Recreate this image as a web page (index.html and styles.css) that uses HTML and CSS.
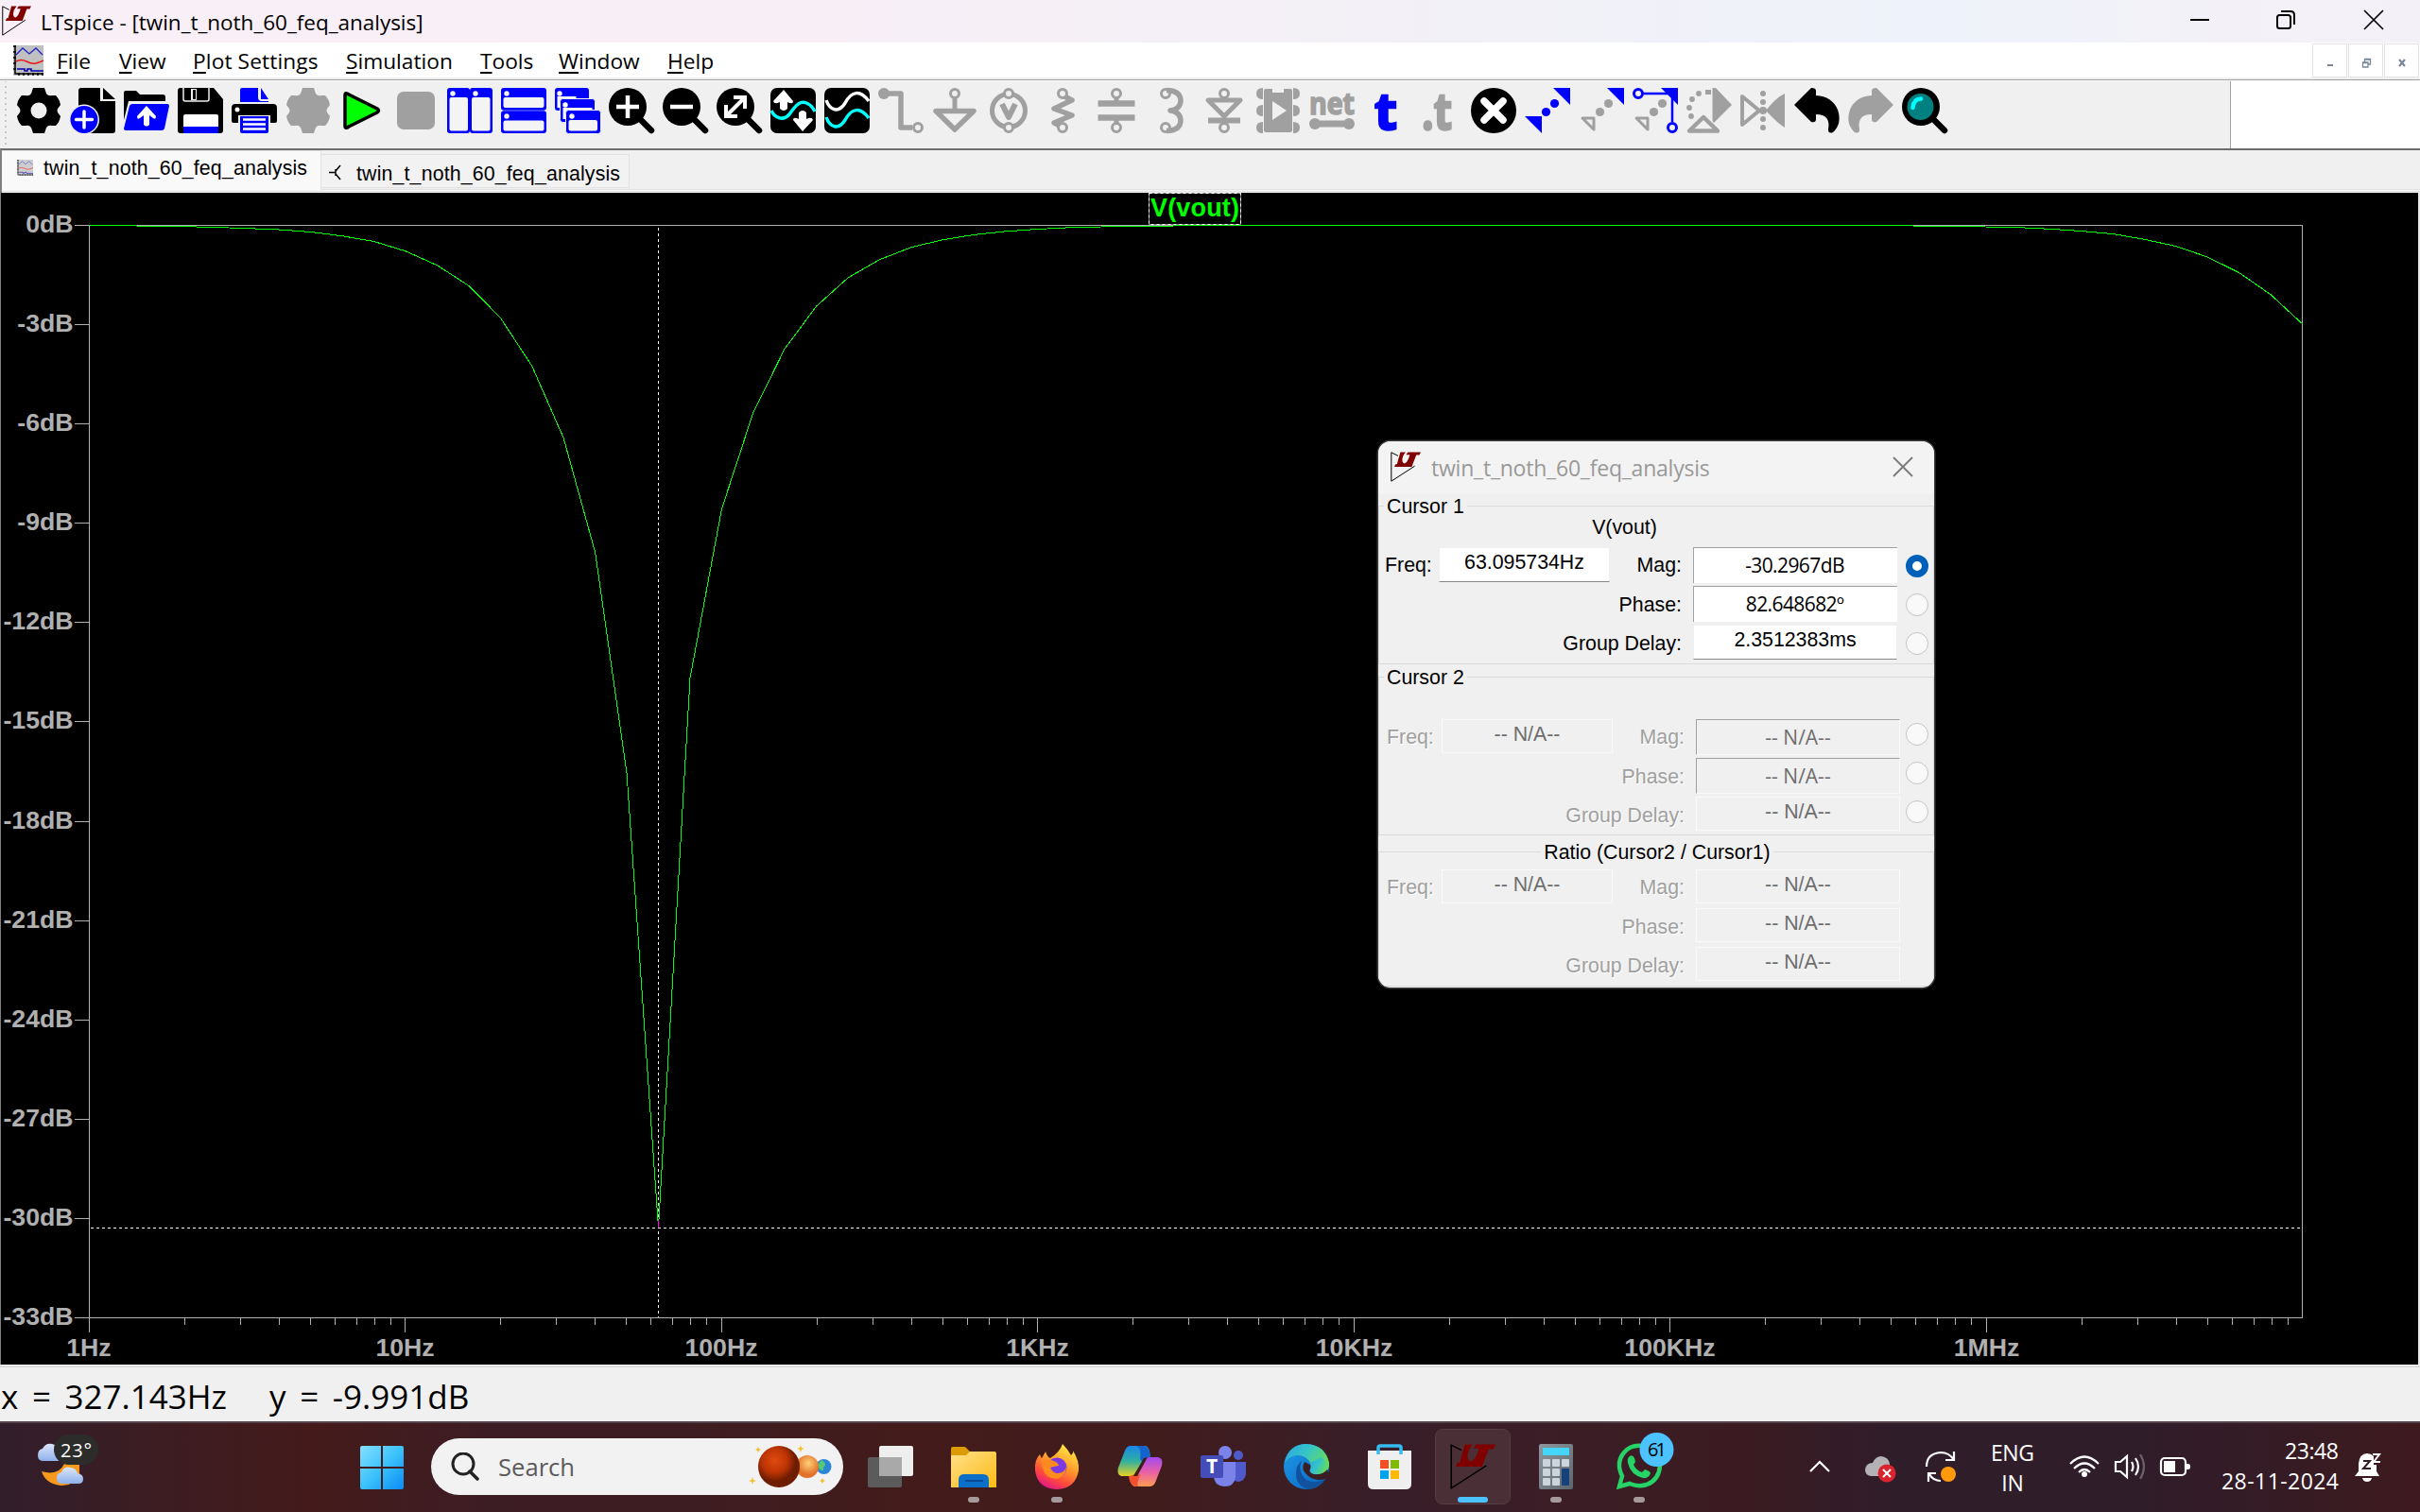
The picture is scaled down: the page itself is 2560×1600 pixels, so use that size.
FILE: index.html
```html
<!DOCTYPE html>
<html lang="en">
<head>
<meta charset="utf-8">
<title>LTspice - [twin_t_noth_60_feq_analysis]</title>
<link rel="stylesheet" href="styles.css">
</head>
<body>
<svg class="defs" width="0" height="0" aria-hidden="true">
  <defs>
    <symbol id="logo" viewBox="0 0 80 80">
      <path d="M20 11L2 2V78L64 38" fill="none" stroke="#000" stroke-width="2.500"/>
      <path d="M26 1H40Q31 11 31 22Q31 30 37 31Q45 29 51 8H41L46 1H80L76 9H68L56 40H10L13 33H17Z" fill="#800000"/>
    </symbol>
    <symbol id="plot" viewBox="0 0 32 32" preserveAspectRatio="none">
      <path d="M0 0H32V32H0Z" fill="#c0c0c0"/>
      <path d="M3 10L10 3L17 9L24 3L31 10" fill="none" stroke="#22c" stroke-width="1.3"/>
      <path d="M3 17Q8 14 14 17T24 19T32 16" fill="none" stroke="#e11" stroke-width="1.5"/>
      <path d="M4 25H12V27H15V25H19V27H32" fill="none" stroke="#00a" stroke-width="1.5"/>
      <path d="M2 0V30H32M0 1H3M0 7H3M0 13H3M0 19H3M0 25H3M6 29V32M11 29V32M16 29V32M21 29V32M26 29V32M31 29V32" fill="none" stroke="#000" stroke-width="1.5"/>
    </symbol>
    <linearGradient id="win" x2="1" y2="1"><stop stop-color="#86e0ff"/><stop offset=".5" stop-color="#3cc2fb"/><stop offset="1" stop-color="#0a8cf5"/></linearGradient>
    <linearGradient id="cloud" x2="0" y2="1"><stop stop-color="#dbe6fb"/><stop offset="1" stop-color="#8fb0ea"/></linearGradient>
    <linearGradient id="folder" x2="1" y2="1"><stop stop-color="#ffe08a"/><stop offset="1" stop-color="#fdbb14"/></linearGradient>
    <linearGradient id="fox" x1=".8" x2=".3" y2="1"><stop stop-color="#fff04a"/><stop offset=".45" stop-color="#ff9a2a"/><stop offset=".75" stop-color="#ff4a3c"/><stop offset="1" stop-color="#e0158a"/></linearGradient>
    <linearGradient id="copA" x2="0" y2="1"><stop stop-color="#1a86e8"/><stop offset=".5" stop-color="#30b0a0"/><stop offset="1" stop-color="#e8d020"/></linearGradient>
    <linearGradient id="copB" x2="0" y2="1"><stop stop-color="#a04af0"/><stop offset=".5" stop-color="#e860a8"/><stop offset="1" stop-color="#ff9a50"/></linearGradient>
    <linearGradient id="edgeA" x2="1" y2=".5"><stop stop-color="#2aa5e0"/><stop offset=".5" stop-color="#35c4c8"/><stop offset="1" stop-color="#67dc56"/></linearGradient>
    <linearGradient id="edgeB" x2="1" y2="1"><stop stop-color="#1d9be8"/><stop offset="1" stop-color="#0a62bd"/></linearGradient>
    <linearGradient id="calc" x2="1" y2="1"><stop stop-color="#8f979e"/><stop offset="1" stop-color="#5d666e"/></linearGradient>
    <radialGradient id="mars" cx=".4" cy=".35"><stop stop-color="#e04a10"/><stop offset=".6" stop-color="#bd3404"/><stop offset="1" stop-color="#6e1c02"/></radialGradient>
    <radialGradient id="venus" cx=".55" cy=".35"><stop stop-color="#ffd07a"/><stop offset="1" stop-color="#e2722a"/></radialGradient>
  </defs>
</svg>

<header class="titlebar">
  <svg class="app-logo" viewBox="0 0 80 80" preserveAspectRatio="none"><use href="#logo"/></svg>
  <span class="title">LTspice - [twin_t_noth_60_feq_analysis]</span>
  <div class="caption">
    <svg viewBox="0 0 20 20"><path d="M0 10H20"/></svg>
    <svg viewBox="0 0 20 20"><rect x="1" y="5" width="14" height="14" rx="2.5"/><path d="M5 1H15Q19 1 19 5V15"/></svg>
    <svg viewBox="0 0 20 20"><path d="M0 0L20 20M20 0L0 20"/></svg>
  </div>
</header>

<nav class="menubar">
  <svg class="doc-icon"><use href="#plot"/></svg>
  <div class="menus">
    <span class="m-file"><u>F</u>ile</span>
    <span class="m-view"><u>V</u>iew</span>
    <span class="m-plot"><u>P</u>lot Settings</span>
    <span class="m-sim"><u>S</u>imulation</span>
    <span class="m-tools"><u>T</u>ools</span>
    <span class="m-win"><u>W</u>indow</span>
    <span class="m-help"><u>H</u>elp</span>
  </div>
  <div class="mdi">
    <span><svg viewBox="0 0 12 12"><path d="M3 9H9" stroke-width="2"/></svg></span>
    <span><svg viewBox="0 0 12 12"><path d="M2.500 6H8V11H2.500ZM4.500 6V2.500H10.500V8H8M4 3H11M2 6.500H8" stroke-width="1.300"/></svg></span>
    <span><svg viewBox="0 0 12 12"><path d="M3 3L9 10M9 3L3 10" stroke-width="2.200"/></svg></span>
  </div>
</nav>

<div class="toolrow">
<div class="toolbar">
  <svg viewBox="0 0 48 48"><path fill-rule="evenodd" d="M18 0H30L32 6Q34 9 38 8L42 8Q46 12 47 18L44 22Q43 24 44 26L47 30Q46 36 42 40L38 40Q34 39 32 42L30 48H18L16 42Q14 39 10 40L6 40Q2 36 1 30L4 26Q5 24 4 22L1 18Q2 12 6 8L10 8Q14 9 16 6ZM24 15.500A8.500 8.500 0 1 0 24 32.500A8.500 8.500 0 1 0 24 15.500Z"/></svg>
  <svg viewBox="0 0 48 48"><path d="M12 0H32V14H48V45Q48 48 45 48H12Q9 48 9 45V3Q9 0 12 0Z"/><path d="M35 0L48 12H35Z"/><circle cx="15" cy="33.500" r="16" fill="#f0f0f0"/><circle cx="15" cy="33.500" r="14.500" fill="#00f"/><path d="M15 25V42M6.500 33.500H23.500" stroke="#fff" stroke-width="3.500" stroke-linecap="round"/></svg>
  <svg viewBox="0 0 48 48"><path d="M0 5Q0 3 2 3H13L17 7H41Q44 7 44 10V14H5L0 34Z"/><path d="M9 17H46Q48 17 48 19L43 43Q42 45 40 45H2Q0 45 0 43L6 19Q7 17 9 17Z" fill="#00f"/><path d="M24 19L34 30Q34 34 31 32L27 29V39Q24 42 21 39V29L17 32Q14 34 14 30Z" fill="#fff"/></svg>
  <svg viewBox="0 0 48 48"><path d="M3 0H38L48 12V45Q48 48 45 48H3Q0 48 0 45V3Q0 0 3 0Z"/><path d="M6 0V12Q6 14 8 14H31Q33 14 33 12V0" fill="none" stroke="#f0f0f0" stroke-width="1.500"/><path d="M14 1H20V13H14Z" fill="#f0f0f0"/><path d="M16 2H19V12H16Z"/><path d="M6 30Q6 28 8 28H41Q43 28 43 30V41H6Z" fill="#fff"/><path d="M6 41H43V48H6Z" fill="#00f"/></svg>
  <svg viewBox="0 0 48 48"><path d="M11 0H28V10Q28 14 32 14H39V15H9V2Q9 0 11 0ZM31 0L39 12H31Z" fill="#00f"/><path d="M4 17H44Q48 17 48 21V35Q48 37 46 37H41V29H7V37H2Q0 37 0 35V21Q0 17 4 17Z"/><circle cx="6" cy="23" r="2.500" fill="#fff"/><path d="M9 30H39V46Q39 48 37 48H11Q9 48 9 46Z" fill="#00f"/><path d="M12 33.500H36M12 38.500H36M12 43.500H36" stroke="#fff" stroke-width="2.500"/></svg>
  <svg class="dim" viewBox="0 0 48 48"><path d="M18 0H30L32 6Q34 9 38 8L42 8Q46 12 47 18L44 22Q43 24 44 26L47 30Q46 36 42 40L38 40Q34 39 32 42L30 48H18L16 42Q14 39 10 40L6 40Q2 36 1 30L4 26Q5 24 4 22L1 18Q2 12 6 8L10 8Q14 9 16 6Z"/></svg>
  <svg viewBox="0 0 48 48"><path d="M6 8Q6 4 10 7L40 22Q43 24 40 26L10 41Q6 44 6 40Z" fill="#0f0" stroke="#000" stroke-width="3.500"/></svg>
  <svg class="dim" viewBox="0 0 48 48"><rect x="4" y="4" width="40" height="40" rx="7"/></svg>
  <svg viewBox="0 0 48 48"><g fill="#00f"><rect width="24" height="48" rx="3"/><rect x="24" width="24" height="48" rx="3"/></g><g fill="#f4f4f4"><rect x="2.500" y="10" width="19.500" height="35.500" rx="2"/><rect x="26" y="10" width="19.500" height="35.500" rx="2"/><circle cx="6" cy="6" r="2.700"/><circle cx="30" cy="6" r="2.700"/></g></svg>
  <svg viewBox="0 0 48 48"><g fill="#00f"><rect width="48" height="23.700" rx="3"/><rect y="24.300" width="48" height="23.700" rx="3"/></g><g fill="#f4f4f4"><rect x="2.500" y="10" width="43" height="11" rx="2"/><rect x="2.500" y="34.500" width="43" height="11" rx="2"/><circle cx="6" cy="6" r="2.700"/><circle cx="6" cy="30" r="2.700"/></g></svg>
  <svg viewBox="0 0 48 48"><g fill="#00f" stroke="#f0f0f0" stroke-width="0"><rect width="36" height="24" rx="3"/><rect x="2.500" y="9" width="20" height="12" fill="#f4f4f4"/><rect x="5.500" y="11.500" width="37" height="25" rx="3" stroke-width="1"/><rect x="8.500" y="21" width="31" height="12" fill="#f4f4f4"/><rect x="11.500" y="23.500" width="37" height="25" rx="3" stroke-width="1"/><rect x="14.500" y="34" width="30.500" height="11.500" rx="2" fill="#f4f4f4"/></g><g fill="#fff"><circle cx="5" cy="6" r="2.700"/><circle cx="11" cy="18" r="2.700"/><circle cx="18" cy="30" r="2.700"/></g></svg>
  <svg viewBox="0 0 48 48"><circle cx="20" cy="20" r="20"/><path d="M34 34L45 45" stroke="#000" stroke-width="6.500" stroke-linecap="round"/><path d="M20 8V32M8 20H32" stroke="#fff" stroke-width="4.500"/></svg>
  <svg viewBox="0 0 48 48"><circle cx="20" cy="20" r="20"/><path d="M34 34L45 45" stroke="#000" stroke-width="6.500" stroke-linecap="round"/><path d="M8 20H32" stroke="#fff" stroke-width="4.500"/></svg>
  <svg viewBox="0 0 48 48"><circle cx="20" cy="20" r="20"/><path d="M34 34L45 45" stroke="#000" stroke-width="6.500" stroke-linecap="round"/><path d="M11 29L29 11M18 10H30V22M10 18V30H22" fill="none" stroke="#fff" stroke-width="4"/></svg>
  <svg viewBox="0 0 48 48"><rect width="48" height="48" rx="7"/><path d="M1 24C4 31 13 36 20 28C27 18 32 12 40 17Q44 19 47 25" fill="none" stroke="#0ff" stroke-width="3.500"/><path d="M14 2L24 14Q24 18 18 15V22Q14 26 10 22V15Q4 18 3 14ZM34 46L24 34Q24 30 30 33V26Q34 22 38 26V33Q44 30 45 34Z" fill="#fff"/></svg>
  <svg viewBox="0 0 48 48"><rect width="48" height="48" rx="7"/><path d="M2 13C6 24 15 27 22 16C29 3 38 2 47 14" fill="none" stroke="#fff" stroke-width="3.500"/><path d="M2 31C6 42 15 45 22 34C29 21 38 20 47 32" fill="none" stroke="#0ff" stroke-width="3.500"/></svg>
  <svg class="dim" viewBox="0 0 48 48"><circle cx="6" cy="6" r="6"/><g class="ln"><path d="M6 6H24V42H36" stroke-width="5.500"/><circle cx="42" cy="42" r="4.500" stroke-width="3"/></g></svg>
  <svg class="dim" viewBox="0 0 48 48"><g class="ln"><circle cx="24" cy="6" r="4.500" stroke-width="3"/><path d="M24 11V22" stroke-width="5"/><path d="M4 24.500H44L24 44Z" stroke-width="5.500"/></g></svg>
  <svg class="dim" viewBox="0 0 48 48"><g class="ln"><circle cx="24" cy="24" r="17.500" stroke-width="5"/><path d="M17 17L24 31L31 17" stroke-width="6"/><circle cx="24" cy="6" r="4.500" stroke-width="3" fill="#f0f0f0"/><circle cx="24" cy="42" r="4.500" stroke-width="3" fill="#f0f0f0"/></g></svg>
  <svg class="dim" viewBox="0 0 48 48"><g class="ln"><path d="M26 9L34 13L15 22L34 29L15 37L21 40" stroke-width="5.500"/><circle cx="24" cy="6" r="4.500" stroke-width="3" fill="#f0f0f0"/><circle cx="24" cy="42" r="4.500" stroke-width="3" fill="#f0f0f0"/></g></svg>
  <svg class="dim" viewBox="0 0 48 48"><g class="ln"><path d="M4.500 16.500H43.500M4.500 31.500H43.500" stroke-width="6.500"/><path d="M24 10V16M24 32V38" stroke-width="5"/><circle cx="24" cy="6" r="4.500" stroke-width="3"/><circle cx="24" cy="42" r="4.500" stroke-width="3"/></g></svg>
  <svg class="dim" viewBox="0 0 48 48"><g class="ln"><path d="M20 2.500Q35 3 35 14Q34 23 24 24Q34 25 35 34Q35 45 20 45.500" stroke-width="5.500"/><circle cx="19" cy="6" r="4.500" stroke-width="3"/><circle cx="19" cy="42" r="4.500" stroke-width="3"/></g></svg>
  <svg class="dim" viewBox="0 0 48 48"><g class="ln"><path d="M7 13H41L24 30Z" stroke-width="5"/><path d="M7 34.500H41" stroke-width="6"/><circle cx="24" cy="6" r="4.500" stroke-width="3" fill="#f0f0f0"/><circle cx="24" cy="42" r="4.500" stroke-width="3"/></g></svg>
  <svg class="dim" viewBox="0 0 48 48"><path d="M11 1H18V5H30V1H37Q39 1 39 3V45Q39 47 37 47H11Q9 47 9 45V3Q9 1 11 1Z"/><path d="M18 14L33 24L18 34Z" fill="#f0f0f0"/><path d="M8 0V12Q1 12 1 6Q1 0 8 0ZM8 18V30Q1 30 1 24Q1 18 8 18ZM8 36V48Q1 48 1 42Q1 36 8 36ZM40 0V12Q47 12 47 6Q47 0 40 0ZM40 18V30Q47 30 47 24Q47 18 40 18ZM40 36V48Q47 48 47 42Q47 36 40 36Z"/></svg>
  <svg class="dim" viewBox="0 0 48 48"><text class="glyph" x="0" y="28" font-size="32" textLength="48" lengthAdjust="spacingAndGlyphs">net</text><path d="M6 38H42" class="ln" stroke-width="7"/><circle cx="6" cy="38" r="6"/><circle cx="42" cy="38" r="6"/></svg>
  <svg viewBox="0 0 48 48"><text class="glyph big" x="12" y="43.500" font-size="54" textLength="24" lengthAdjust="spacingAndGlyphs" fill="#00f" stroke="#00f">t</text></svg>
  <svg class="dim" viewBox="0 0 48 48"><text class="glyph big grey" x="5" y="43.500" font-size="54" textLength="32" lengthAdjust="spacingAndGlyphs">.t</text></svg>
  <svg viewBox="0 0 48 48"><circle cx="24" cy="24" r="24"/><path d="M14 14L34 34M34 14L14 34" stroke="#fff" stroke-width="7.500" stroke-linecap="round"/></svg>
  <svg viewBox="0 0 48 48"><path d="M30 0H48V18ZM0 30H18V48Z" fill="#00f"/><circle cx="31.500" cy="16.500" r="4.600" fill="#00f"/><circle cx="22.500" cy="25.500" r="4.600" fill="#00f"/></svg>
  <svg class="dim" viewBox="0 0 48 48"><path d="M30 0H48V18Z" fill="#00f"/><path d="M4 32H16V44Z" class="ln" stroke-width="3"/><circle cx="31.500" cy="16.500" r="4.600"/><circle cx="22.500" cy="25.500" r="4.600"/></svg>
  <svg class="dim" viewBox="0 0 48 48"><path d="M30 0H48V18Z" fill="#00f"/><path d="M4 32H16V44Z" class="ln" stroke-width="3"/><circle cx="31.500" cy="16.500" r="4.600"/><circle cx="22.500" cy="25.500" r="4.600"/><g fill="none" stroke="#00f" stroke-width="3"><circle cx="6" cy="6" r="4.500"/><path d="M11 6H42V36" stroke-width="2.500"/><circle cx="42" cy="42" r="4.500"/></g></svg>
  <svg class="dim" viewBox="0 0 48 48"><path d="M27.500 0H31L48 18L29 37L27.500 35Z"/><path d="M3 45.500H33L18 31Z" class="ln" stroke-width="4.500"/><circle cx="5" cy="30" r="2.900"/><circle cx="3" cy="21" r="2.900"/><circle cx="6" cy="12" r="2.900"/><circle cx="13" cy="6" r="2.900"/><path d="M20 2H26V7H20Z"/></svg>
  <svg class="dim" viewBox="0 0 48 48"><path d="M2 9V39L20 24Z" class="ln" stroke-width="4"/><path d="M47 6V42Q40 38 27 24Q38 10 47 6Z"/><circle cx="24" cy="6" r="3"/><circle cx="24" cy="15" r="3"/><circle cx="24" cy="24" r="4"/><circle cx="24" cy="33" r="3"/><circle cx="24" cy="42" r="3"/></svg>
  <svg viewBox="0 0 48 48"><path id="undo" d="M0 18L18 0Q23 0 23 3V8Q40 9 46 23Q51 38 41 47Q36 49 36 44Q39 28 23 28V33Q23 37 18 36Z"/></svg>
  <svg class="dim" viewBox="0 0 48 48"><use href="#undo" transform="matrix(-1 0 0 1 48 0)"/></svg>
  <svg viewBox="0 0 48 48"><circle cx="20" cy="20" r="20"/><path d="M34 34L45 45" stroke="#000" stroke-width="6.500" stroke-linecap="round"/><circle cx="19.500" cy="20" r="14" fill="#008080"/><path d="M11.500 21Q12 12 20 11.500" fill="none" stroke="#0ff" stroke-width="4.500" stroke-linecap="round"/></svg>
</div>
</div>

<div class="tabs">
  <div class="tab active"><svg class="tab-plot"><use href="#plot"/></svg><span>twin_t_noth_60_feq_analysis</span></div>
  <div class="tab"><svg class="tab-sch" viewBox="0 0 13 17"><path d="M0 8.500H7M7 5V12M7 7L12 1M7 10L12 16" fill="none" stroke="#000" stroke-width="1.500"/></svg><span>twin_t_noth_60_feq_analysis</span></div>
</div>

<main class="plot-area">
<svg class="graph" viewBox="0 204 2560 1240">
  <defs>
    <path id="decade" d="M.5 1395V1410M101.200 1395V1402M160.100 1395V1402M201.800 1395V1402M234.300 1395V1402M260.700 1395V1402M283.100 1395V1402M302.500 1395V1402M319.600 1395V1402"/>
  </defs>
  <g class="axis">
    <path d="M79 238.500H2435.500V1394.500M94.500 238.500V1394.500M79 1394.500H2435.500M79 343.500H94M79 448.500H94M79 553.500H94M79 658.500H94M79 763.500H94M79 869.500H94M79 974.500H94M79 1079.500H94M79 1184.500H94M79 1289.500H94"/>
    <use href="#decade" x="94"/><use href="#decade" x="428"/><use href="#decade" x="763"/><use href="#decade" x="1097"/><use href="#decade" x="1432"/><use href="#decade" x="1766"/><use href="#decade" x="2101"/>
  </g>
  <g class="ylab">
    <text x="77.500" y="246">0dB</text><text x="77.500" y="351">-3dB</text><text x="77.500" y="456">-6dB</text><text x="77.500" y="561">-9dB</text><text x="77.500" y="666">-12dB</text><text x="77.500" y="771">-15dB</text><text x="77.500" y="877">-18dB</text><text x="77.500" y="982">-21dB</text><text x="77.500" y="1087">-24dB</text><text x="77.500" y="1192">-27dB</text><text x="77.500" y="1297">-30dB</text><text x="77.500" y="1402">-33dB</text>
  </g>
  <g class="xlab">
    <text x="94" y="1434.500">1Hz</text><text x="428.500" y="1434.500">10Hz</text><text x="763" y="1434.500">100Hz</text><text x="1097.500" y="1434.500">1KHz</text><text x="1432.500" y="1434.500">10KHz</text><text x="1766.500" y="1434.500">100KHz</text><text x="2101.500" y="1434.500">1MHz</text>
  </g>
  <polyline class="trace" points="94.500,238.500 128,238.700 161.400,239.300 194.800,239.700 228.300,240.500 261.700,241.700 295.100,243 328.600,245.500 362,249.700 395.500,255.500 428.900,265.700 462.400,280.700 495.800,302.300 529.200,336 562.700,387.300 596.100,463.300 629.600,584.300 663,818 696.500,1299 730,717.500 763.400,538.800 796.800,436.600 830.200,368.900 863.700,324 897.100,293.900 930.600,274.700 964,261.700 997.500,253.700 1031,248.300 1064.400,244.800 1097.800,242.500 1131.200,240.800 1164.700,240 1198.100,239.500 1231.600,239.200 1265,238.500 1999,238.500 2032.700,239.200 2066.200,239.500 2100,240 2134,240.600 2168,242.300 2201,244.500 2235,247.500 2268.300,253.300 2301.700,260.500 2335.200,272 2368.600,288.500 2402,311.700 2435.500,342.700"/>
  <path class="cursor" d="M696.500 241V1394M96 1299.500H2435"/>
  <path d="M696.500 1291V1299" stroke="#f0f" stroke-width="1"/>
  <rect x="1215.500" y="204.500" width="97" height="33" fill="#000" stroke="#808080"/>
  <rect x="1215.500" y="204.500" width="97" height="33" fill="none" stroke="#fff" stroke-dasharray="3 3"/>
  <text class="trace-name" x="1217" y="228.500" textLength="94">V(vout)</text>
</svg>

<section class="dialog">
  <div class="dlg-title">
    <svg class="dlg-logo"><use href="#logo"/></svg>
    <span>twin_t_noth_60_feq_analysis</span>
    <svg class="dlg-close" viewBox="0 0 20 20"><path d="M0 0L20 20M20 0L0 20"/></svg>
  </div>
  <div class="group g1">
    <h3>Cursor 1</h3>
    <div class="sub">V(vout)</div>
    <div class="row"><label>Freq:</label><b class="field">63.095734Hz</b><label class="r">Mag:</label><b class="field sunk">-30.2967dB</b><i class="radio on"></i></div>
    <div class="row"><label class="r wide">Phase:</label><b class="field sunk">82.648682º</b><i class="radio"></i></div>
    <div class="row"><label class="r wide">Group Delay:</label><b class="field">2.3512383ms</b><i class="radio"></i></div>
  </div>
  <div class="group off g2">
    <h3>Cursor 2</h3>
    <div class="sub"></div>
    <div class="row"><label>Freq:</label><b class="field">-- N/A--</b><label class="r">Mag:</label><b class="field sunk">-- N/A--</b><i class="radio"></i></div>
    <div class="row"><label class="r wide">Phase:</label><b class="field sunk">-- N/A--</b><i class="radio"></i></div>
    <div class="row"><label class="r wide">Group Delay:</label><b class="field">-- N/A--</b><i class="radio"></i></div>
  </div>
  <div class="group off g3">
    <h3>Ratio (Cursor2 / Cursor1)</h3>
    <div class="row"><label>Freq:</label><b class="field">-- N/A--</b><label class="r">Mag:</label><b class="field">-- N/A--</b></div>
    <div class="row"><label class="r wide">Phase:</label><b class="field">-- N/A--</b></div>
    <div class="row"><label class="r wide">Group Delay:</label><b class="field">-- N/A--</b></div>
  </div>
</section>
</main>

<div class="status"><span class="sx">x = 327.143Hz</span><span class="sy">y = -9.991dB</span></div>

<footer class="taskbar">
  <svg class="weather" viewBox="40 1514 68 62" width="68" height="62">
    <path d="M46 1546Q40 1546 40 1540Q40 1534 45 1533Q48 1527 55 1528Q62 1529 64 1536V1546Z" fill="url(#cloud)"/>
    <path d="M44 1557Q62 1562 68 1549H84V1560Q78 1573 64 1572Q48 1570 44 1557Z" fill="#f59a1c"/>
    <path d="M66 1570Q60 1570 60 1564Q60 1559 65 1558Q68 1551 75 1553Q81 1554 82 1559Q88 1560 88 1565Q88 1570 83 1570Z" fill="url(#cloud)"/>
    <rect x="57" y="1518" width="47" height="32" rx="16" fill="#2c2c2b"/>
    <text class="badge-text" x="64" y="1542" fill="#fff" textLength="33">23°</text>
  </svg>
  <svg class="start" viewBox="0 0 46 46"><path d="M2 0H22V22H0V2Q0 0 2 0ZM24 0H44Q46 0 46 2V22H24ZM0 24H22V46H2Q0 46 0 44ZM24 24H46V44Q46 46 44 46H24Z" fill="url(#win)"/></svg>
  <div class="search">
    <svg class="lens" viewBox="0 0 30 30"><circle cx="13" cy="12" r="11" fill="none" stroke="#222" stroke-width="3"/><path d="M20 20L28 28" stroke="#222" stroke-width="3.500" stroke-linecap="round"/></svg>
    <span>Search</span>
    <svg class="planets" viewBox="790 1526 92 52">
      <circle cx="871.500" cy="1552" r="8" fill="#2c86d8"/><path d="M869 1545Q876 1549 871 1553Q872 1558 867 1555Q864 1549 869 1545Z" fill="#55c873"/>
      <circle cx="854" cy="1552" r="12" fill="url(#venus)"/><circle cx="824" cy="1552" r="22" fill="url(#mars)"/>
      <path d="M847 1529L848 1532L851 1533L848 1534L847 1537L846 1534L843 1533L846 1532ZM802 1531L803 1533L805 1534L803 1535L802 1537L801 1535L799 1534L801 1533ZM796 1563L797 1566L800 1567L797 1568L796 1571L795 1568L792 1567L795 1566ZM870 1564L871 1566L873 1567L871 1568L870 1570L869 1568L867 1567L869 1566Z" fill="#f2c02e"/>
    </svg>
  </div>
  <div class="apps">
    <div class="app"><svg viewBox="0 0 48 48"><rect x="12" y="2" width="36" height="32" rx="2" fill="#eee"/><rect x="0" y="14" width="36" height="32" rx="2" fill="#5b5b5b"/><rect x="12" y="14" width="24" height="20" fill="#a9a9a9"/></svg></div>
    <div class="app run"><svg viewBox="0 0 48 48"><path d="M0 5Q0 3 2 3H15L20 8V12H0Z" fill="#dc9a06"/><path d="M0 12H16L20 8H46Q48 8 48 10V46H0Z" fill="url(#folder)"/><path d="M8 46V38Q8 32 14 32H34Q40 32 40 38V46Z" fill="#0b6fc8"/><path d="M15 39H34" stroke="#084a94" stroke-width="2"/></svg></div>
    <div class="app run"><svg viewBox="0 0 48 48"><path d="M30 0Q36 6 39 12Q42 9 41 7Q48 18 47 28Q44 47 24 48Q3 47 1 28Q0 17 6 11Q7 14 8 15Q11 10 12 8Q14 14 17 15Q27 9 30 0Z" fill="url(#fox)"/><circle cx="24" cy="25" r="10.500" fill="#7a3ae0"/><path d="M8 18Q16 15 23 19Q26 21 26 23Q20 24 17 25Q20 31 25 31Q32 31 34 24Q34 34 24 37Q12 37 9 26Z" fill="#ff8a1e"/></svg></div>
    <div class="app"><svg viewBox="0 0 48 48"><path d="M14 2H30Q34 3 35 14Q29 14 27 20L20 29Q18 35 12 34H4Q-1 32 1 25L8 7Q10 2 14 2Z" fill="url(#copA)"/><path d="M28 2Q34 4 35 14Q29 14 27 20L24 16Q26 4 20 2Z" fill="#1662cc"/><path d="M34 14H43Q49 15 47 23L40 41Q38 45 34 45H18Q14 44 13 34Q19 34 21 29L27 18Q29 14 34 14Z" fill="url(#copB)"/><path d="M12 34H13Q19 33 21 29L24 33Q20 42 22 45Q13 46 12 34Z" fill="#f0502e"/><path d="M28 15L32 14L21 34L17 34Z" fill="#3f1c1e"/></svg></div>
    <div class="app"><svg viewBox="0 0 48 48"><circle cx="26" cy="9" r="7" fill="#7b83eb"/><circle cx="40" cy="12" r="5" fill="#5059c9"/><path d="M35 19H48V32Q47 39 40 40Q36 40 35 36Z" fill="#5059c9"/><path d="M14 19H37V35Q36 45 25 45Q14 44 14 34Z" fill="#7b83eb"/><rect y="12" width="24" height="24" rx="2" fill="#444db8"/><text class="tee" x="12" y="31" fill="#fff">T</text></svg></div>
    <div class="app"><svg viewBox="0 0 48 48"><circle cx="24" cy="24" r="24" fill="url(#edgeB)"/><path d="M1 20Q5 0 24 0Q44 1 48 20Q49 31 36 32Q27 32 28 27Q30 24 28 20Q24 12 14 12Q5 13 1 20Z" fill="url(#edgeA)"/><path d="M19 18Q14 29 24 38Q34 43 44 37Q38 47 26 48Q13 44 13 32Q13 22 19 18Z" fill="#10529e"/><path d="M28 22Q29 26 27 28Q28 33 37 32Q43 31 46 27L48 33L44 37Q34 40 26 34Q17 27 22 19Z" fill="#3b1d24"/><path d="M28 20Q30 24 28 27Q27 32 36 32Q45 31 48 22L40 14Z" fill="url(#edgeA)"/></svg></div>
    <div class="app"><svg viewBox="0 0 48 48"><path d="M1 7H47V42Q47 48 41 48H7Q1 48 1 42Z" fill="#efefef"/><path d="M12 11V4Q12 2 14 2H34Q36 2 36 4V11" fill="none" stroke="#35bdf3" stroke-width="3.500"/><path d="M14 17H23V26H14Z" fill="#f25022"/><path d="M25 17H34V26H25Z" fill="#7fba00"/><path d="M14 28H23V37H14Z" fill="#00a4ef"/><path d="M25 28H34V37H25Z" fill="#ffb900"/></svg></div>
    <div class="app current"><svg viewBox="0 0 80 80"><use href="#logo"/></svg></div>
    <div class="app run"><svg viewBox="0 0 48 48"><rect x="6" width="36" height="48" rx="2" fill="url(#calc)"/><rect x="10" y="4" width="28" height="8" rx="1" fill="#43d6fa"/><g fill="#ccd5dd"><rect x="10" y="16" width="8" height="8" rx="1"/><rect x="20" y="16" width="8" height="8" rx="1"/><rect x="30" y="16" width="8" height="8" rx="1"/><rect x="10" y="26" width="8" height="8" rx="1"/><rect x="20" y="26" width="8" height="8" rx="1"/><rect x="10" y="36" width="8" height="8" rx="1"/><rect x="20" y="36" width="8" height="8" rx="1"/></g><rect x="30" y="26" width="8" height="18" rx="1" fill="#16427c"/></svg></div>
    <div class="app run"><svg viewBox="0 0 48 48" class="wa"><path d="M3 45L6 34Q-1 20 8 9Q17-1 31 3Q45 8 46 23Q45 38 32 43Q23 46 14 42Z" fill="none" stroke="#25d366" stroke-width="4.500"/><path d="M14 13Q17 11 19 15L20 19L18 22Q21 28 27 30L30 27Q36 29 36 31Q34 37 28 36Q15 33 12 20Q11 15 14 13Z" fill="#25d366"/><circle cx="42.500" cy="6" r="18" fill="#4cc2ff"/><text class="badge-text" x="33" y="13" textLength="20">61</text></svg></div>
  </div>
  <svg class="tray" viewBox="1900 1506 660 94" width="660" height="94">
    <g fill="none" stroke="#fff" stroke-width="2.200">
      <path d="M1915 1557L1925 1547L1935 1557"/>
      <path d="M2038 1552Q2038 1538 2053 1537Q2062 1537 2067 1545M2067 1536V1545H2058M2040 1568V1559H2048M2041 1560Q2045 1567 2053 1567"/>
      <path d="M2190 1549Q2205 1534 2220 1549M2194 1554Q2205 1543 2216 1554M2199 1558Q2205 1552 2211 1558"/>
      <path d="M2238 1547H2243L2250 1541V1563L2243 1557H2238ZM2255 1547Q2258 1552 2255 1557M2259 1543Q2265 1552 2259 1561"/>
      <path d="M2264 1539Q2272 1552 2264 1565" stroke="#6d5d66"/>
      <rect x="2286" y="1543" width="26" height="18" rx="4"/>
    </g>
    <path d="M1979 1562Q1973 1561 1973 1555Q1974 1548 1981 1548Q1984 1541 1990 1541Q1998 1542 1999 1549V1562Z" fill="#b5b2b5"/>
    <circle cx="1996" cy="1559" r="9.500" fill="#d9232e"/><path d="M1992 1555L2000 1563M2000 1555L1992 1563" stroke="#fff" stroke-width="2"/>
    <circle cx="2061" cy="1560" r="8" fill="#ff9a0c"/>
    <circle cx="2205" cy="1560" r="3" fill="#fff"/>
    <path d="M2289 1546H2301V1558H2289ZM2313 1549H2315Q2317 1549 2317 1552Q2317 1555 2315 1555H2313Z" fill="#fff"/>
    <path d="M2491 1562L2495 1557V1549Q2496 1538 2504 1538Q2508 1538 2511 1541V1550H2514V1557L2517 1562ZM2499 1564H2509Q2508 1568 2504 1568Q2500 1568 2499 1564Z" fill="#fff"/>
    <path d="M2500 1546H2507L2500 1554H2508" fill="none" stroke="#331d28" stroke-width="2"/><path d="M2510 1539H2517L2511 1547H2518" fill="none" stroke="#fff" stroke-width="2"/>
    <g class="tray-text"><text x="2129" y="1545.500" text-anchor="middle" textLength="46">ENG</text><text x="2129" y="1577.500" text-anchor="middle">IN</text><text x="2474" y="1544" text-anchor="end" textLength="57">23:48</text><text x="2474" y="1575.500" text-anchor="end" textLength="124">28-11-2024</text></g>
  </svg>
</footer>
</body>
</html>
```
FILE: styles.css
```css
* { box-sizing: border-box; }
body {
  margin: 0;
  width: 2560px;
  height: 1600px;
  overflow: hidden;
  display: flex;
  flex-direction: column;
  background: #f0f0f0;
  font-family: "Open Sans", "Noto Sans", sans-serif;
  color: #000;
}
svg { display: block; flex: none; }
.defs { position: absolute; }

.titlebar {
  height: 45px;
  flex: none;
  display: flex;
  background: linear-gradient(90deg, #f9eff7 0, #f8eef6 30%, #f3f0f6 55%, #eef2fa 80%, #f3f1f7 92%, #f4f0f7 100%);
}
.app-logo { width: 31px; height: 32px; margin: 6px 0 0 2px; }
.title { margin-left: 10px; line-height: 47px; font-size: 22.5px; letter-spacing: -.02px; white-space: nowrap; }
.caption { margin-left: auto; display: flex; padding: 11px 39px 0 0; }
.caption svg { width: 20px; height: 20px; margin-left: 71px; overflow: visible; fill: none; stroke: #000; stroke-width: 2; }
.caption svg:nth-child(3) { stroke-width: 1.7; margin-left: 73px; }

.menubar { height: 37px; flex: none; display: flex; background: #fff; }
.doc-icon { width: 32px; height: 32px; margin: 3px 0 0 14px; }
.menus { display: flex; margin-left: 14px; font-size: 22.7px; line-height: 40px; white-space: nowrap; }
.menus u { text-decoration-thickness: 1.5px; text-underline-offset: 3px; }
.m-file { width: 66px; }
.m-view { width: 78px; }
.m-plot { width: 162px; letter-spacing: .12px; }
.m-sim { width: 142px; }
.m-tools { width: 83px; }
.m-win { width: 115px; }
.mdi { margin-left: auto; display: flex; gap: 1px; padding: 1px 1px 0 0; }
.mdi span { width: 37px; height: 36px; border: 1px solid #e4e4e4; padding: 13px 0 0 12px; }
.mdi svg { width: 12px; height: 12px; fill: none; stroke: #778797; }

.toolrow {
  height: 75px;
  flex: none;
  display: flex;
  border-top: 1px solid #f0f0f0;
  background: linear-gradient(#f0f0f0 1px, #a0a0a0 1px, #a0a0a0 2px, #fff 2px);
  padding-top: 3px;
}
.toolbar {
  width: 2360px;
  background: radial-gradient(circle, #c8c8c8 1px, transparent 1.5px) 3px 3px / 6px 6px repeat-y, #f0f0f0;
  border-right: 1px solid #a0a0a0;
  display: flex;
  gap: 9px;
  padding: 7px 0 0 17px;
}
.toolbar svg { width: 48px; height: 48px; overflow: visible; }
.dim { fill: #a0a0a0; }
.ln { fill: none; stroke: #a0a0a0; stroke-linejoin: round; }
.glyph { font-family: "Open Sans", sans-serif; font-weight: 700; stroke: #a0a0a0; stroke-width: 1.6; }
.glyph.big { stroke: #00f; stroke-width: 2.5; }
.glyph.grey { stroke: #a0a0a0; }

.tabs {
  height: 47px;
  flex: none;
  display: flex;
  align-items: flex-start;
  border-top: 2px solid #6d6d6d;
  border-left: 2px solid #808080;
  background: linear-gradient(#f0f0f0 41px, #e2e2e2 41px, #e2e2e2 42px, #f7f7f7 42px, #f7f7f7 43px, #e2e2e2 43px, #e2e2e2 44px, #f0f0f0 44px);
  font: 21.33px/24px "Liberation Sans", Arial, sans-serif;
  letter-spacing: .15px;
}
.tab {
  height: 36px;
  width: 326px;
  margin-top: 4px;
  padding: 9px 0 0 8px;
  border: 1px solid #e2e2e2;
  border-left: 0;
  background: #f2f2f2;
  display: flex;
  white-space: nowrap;
}
.tab.active { width: 338px; height: 42px; margin-top: 0; padding: 7px 0 0 16px; background: #f9f9f9; border-bottom: 0; }
.tab-plot { width: 17px; height: 17px; margin: 2px 11px 0 0; opacity: .75; }
.tab-sch { width: 13px; height: 17px; margin: 1px 16px 0 0; }
.tab span { margin-top: -1px; }

.plot-area { height: 1240px; flex: none; position: relative; background: #000; border-left: 1px solid #808080; border-right: 2px solid #e8e8e8; }
.graph { width: 2560px; height: 1240px; margin-left: -1px; }
.axis { fill: none; stroke: #b0b0b0; shape-rendering: crispEdges; }
.ylab, .xlab { font: bold 26.67px "Liberation Sans", Arial, sans-serif; fill: #b0b0b0; }
.ylab { text-anchor: end; }
.xlab { text-anchor: middle; }
.trace { fill: none; stroke: #0f0; stroke-width: 1; shape-rendering: crispEdges; }
.cursor { fill: none; stroke: #fff; stroke-dasharray: 3 3; shape-rendering: crispEdges; }
.trace-name { font: bold 27px "Liberation Sans", Arial, sans-serif; fill: #0f0; }

/* floating cursor readout window */
.dialog {
  position: absolute;
  left: 1457px;
  top: 263px;
  width: 588px;
  height: 578px;
  border-radius: 13px;
  background: #f0f0f0;
  box-shadow: 0 0 0 1.500px #3c3c3c;
  overflow: hidden;
  font: 21.33px/24px "Liberation Sans", Arial, sans-serif;
}
.dlg-title { height: 56px; display: flex; background: #f3f3f3; color: #999; }
.dlg-title span { font: 23px/57px "Open Sans", sans-serif; margin-left: 11px; letter-spacing: -.22px; }
.dlg-logo { width: 32px; height: 32px; margin: 11px 0 0 13px; }
.dlg-close { width: 20px; height: 20px; margin: 17px 23px 0 auto; stroke: #7d7d7d; stroke-width: 2; overflow: visible; }
.group { position: relative; }
.group::before { content: ""; display: block; border: 1px solid #dcdcdc; position: absolute; inset: 0; }
.group h3 { position: relative; margin: 0; font: inherit; line-height: 24px; width: max-content; background: #f0f0f0; padding: 0 3px; top: -11px; }
.g1 { margin-top: 12px; height: 168px; }
.g2 { margin-top: 13px; height: 168px; }
.g3 { margin-top: 17px; height: 143px; }
.g1 h3, .g2 h3 { margin-left: 6px; height: 24px; margin-bottom: -12px; }
.g3 h3 { margin: 0 auto -5px; height: 24px; left: 1px; }
.sub { position: relative; text-align: center; padding-right: 67px; height: 32px; top: -1px; }
.g2 .sub { height: 33px; }
.row {
  position: relative;
  display: grid;
  grid-template-columns: 64px 181px 88px 216px 1fr;
  height: 41px;
}
.off .row { grid-template-columns: 67px 181px 88px 216px 1fr; color: #a0a0a0; }
.row label { padding: 7px 0 0 7px; white-space: nowrap; }
.off .row label { text-shadow: 1px 1px #fff; padding-left: 9px; padding-top: 7px; }
.row label.r { text-align: right; padding-right: 12px; }
.row label.wide { grid-column: 2 / 4; padding-top: 8px; }
.field { font-weight: 400; text-align: center; height: 37px; line-height: 31px; background: #fff; border: 1px solid #f0f0f0; border-bottom-color: #868686; }
.field.sunk { font: 21px/37px "Open Sans", sans-serif; letter-spacing: -.6px; border: 0; border-top: 1px solid #a0a0a0; border-left: 1px solid #a0a0a0; height: 38px; padding: 0 2px 0 0; }
.off .field { background: #f0f0f0; border: 1px solid #fafafa; color: #6d6d6d; line-height: 30px; height: 36px; }
.off .field.sunk { border-top-color: #a0a0a0; border-left-color: #a0a0a0; letter-spacing: 0; line-height: 36px; height: 38px; padding: 0; }
.radio { width: 24px; height: 24px; border-radius: 50%; border: 1.5px solid #c4c4c4; background: #f9f9f9; margin: 8px 0 0 9px; }
.off .radio { margin: 4px 0 0 6px; }
.radio.on { border: 7px solid #005fb8; background: #fff; }

.status { height: 60px; flex: none; border-top: 1px solid #fff; box-shadow: inset 0 2px #dcdcdc; display: flex; font-size: 35px; line-height: 65px; white-space: pre; word-spacing: 5.5px; padding-left: 1px; }
.sx { width: 284px; }

.taskbar {
  height: 96px;
  flex: none;
  border-top: 2px solid #54434a;
  display: flex;
  background: linear-gradient(90deg, #311e2b 0, #3a1d24 5%, #441a1a 13%, #3d1d24 20%, #3d1d22 28%, #431b1a 38%, #401c1d 48%, #381e29 57%, #3b1d25 66%, #3b1b21 72%, #301d2a 78%, #2f1d2a 88%, #381b23 96%, #3e1a1e 100%);
}
.weather { margin: 8px 0 0 40px; }
.badge-text { font-size: 20px; }
.start { width: 46px; height: 46px; margin: 24px 0 0 273px; }
.search { width: 436px; height: 60px; margin: 16px 0 0 29px; border-radius: 30px; background: #f3f2f3; display: flex; }
.lens { width: 30px; height: 30px; margin: 15px 0 0 21px; }
.search span { font-size: 25.6px; line-height: 61px; margin-left: 20px; color: #5c5a5b; }
.planets { width: 92px; height: 52px; margin: 4px 10px 0 auto; }
.apps { display: flex; gap: 8px; margin: 6px 0 0 10px; }
.app { width: 80px; height: 80px; padding: 16px; position: relative; border-radius: 8px; }
.app svg { width: 48px; height: 48px; overflow: visible; }
.run::after { content: ""; position: absolute; left: 34px; top: 72px; width: 12px; height: 6px; border-radius: 3px; background: #a69a9c; }
.current { background: #4a2f36; border: 1px solid #553d43; padding: 15px; }
.current::after { content: ""; position: absolute; left: 23px; top: 71px; width: 32px; height: 6px; border-radius: 3px; background: #4cc2ff; }
.tee { font: bold 21px "Open Sans", sans-serif; text-anchor: middle; }
.tray { margin-left: auto; }
.tray-text { font-size: 23px; fill: #fff; }
```
